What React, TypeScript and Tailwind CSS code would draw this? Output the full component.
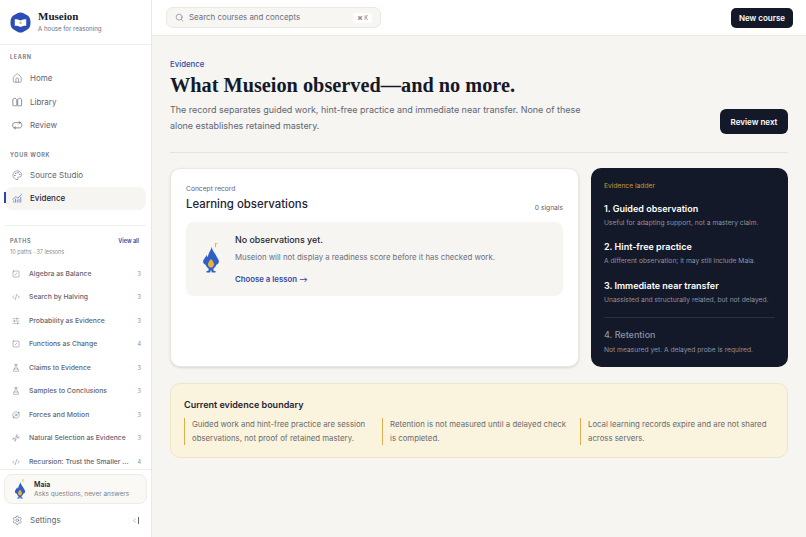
import { ChartNoAxesCombined, ChevronLeft, CodeXml, Dna, FlaskConical, House, Orbit, Palette, Search, Settings, SlidersHorizontal, SquareSlash } from 'lucide-react';

const paths = [
  { name: 'Algebra as Balance', n: 3, icon: SquareSlash },
  { name: 'Search by Halving', n: 3, icon: CodeXml },
  { name: 'Probability as Evidence', n: 3, icon: SlidersHorizontal },
  { name: 'Functions as Change', n: 4, icon: SquareSlash },
  { name: 'Claims to Evidence', n: 3, icon: FlaskConical },
  { name: 'Samples to Conclusions', n: 3, icon: FlaskConical },
  { name: 'Forces and Motion', n: 3, icon: Orbit },
  { name: 'Natural Selection as Evidence', n: 3, icon: Dna },
  { name: 'Recursion: Trust the Smaller ...', n: 4, icon: CodeXml },
];

function Flame({ className }: { className: string }) {
  return (
    <svg viewBox="0 0 20 36" className={className}>
      <path d="M11 5c0 4 3 6 4.500 9.500.8 2 2.300 3.500 3 5.500.8 2.500-.5 4.500-2.500 5-.8 2-2 3.500-3.500 4.500l.5 2.500h2v1.500H11L10 30.500 9 33.500H5V32h2l.5-2.500C6 28.500 4.800 27 4 25c-2-.5-3.300-2.500-2.500-5 .7-2 2.500-3 3.500-6 .5 1 1 1.800 1.500 2.500C7 12 9.500 9.500 11 5z" fill="#2f5fc4" />
      <path d="M10 18.500c1.800 2 3.300 3.800 3.300 6 0 2.200-1.500 3.700-3.300 3.700s-3.300-1.500-3.300-3.700c0-2.200 1.500-4 3.300-6z" fill="#e8b23c" />
      <path d="M15 1.500v3.500" stroke="#e8b23c" strokeWidth="1.200" strokeLinecap="round" />
      <path d="M15 1.500h1.500" stroke="#e8b23c" strokeWidth="1" strokeLinecap="round" />
    </svg>
  );
}

function LibraryIcon({ className }: { className: string }) {
  return (
    <svg viewBox="0 0 12 12" fill="none" stroke="currentColor" strokeWidth="0.9" className={className}>
      <path d="M1 3.500C1 2 2 1.500 3 1.500S5.500 2 5.500 3.500v6c0 .7-.8 1-1.500.6-.6-.3-1.400-.3-2 0-.5.3-1 0-1-.6z" />
      <path d="M6.500 3.500C6.500 2 8 1.500 9 1.500s2 .5 2 2v6c0 .6-.5.9-1 .6-.6-.3-1.400-.3-2 0-.7.4-1.500.1-1.500-.6z" />
    </svg>
  );
}

function ReviewIcon({ className }: { className: string }) {
  return (
    <svg viewBox="0 0 12 12" fill="none" stroke="currentColor" strokeWidth="0.9" strokeLinecap="round" className={className}>
      <path d="M2.500 9C1.200 8.500.8 7.500.8 6c0-2 1-3 2.700-3h6" />
      <path d="M9.500 3C10.800 3.500 11.200 4.500 11.200 6c0 2-1 3-2.700 3h-6" />
      <path d="M8 1.800 9.500 3 8 4.200M4 7.800 2.500 9 4 10.200" />
    </svg>
  );
}

function NavItem({ icon: Icon, label, active }: { icon: React.ElementType; label: string; active?: boolean }) {
  return (
    <div className={`relative mx-[5px] flex h-[23.5px] items-center gap-[7.500px] rounded-[8px] pl-[7px] text-[8px] ${active ? 'bg-[#f6f5f2] font-medium text-[#1f2433]' : 'text-[#5f6472]'}`}>
      {active && <span className="absolute left-[-1px] top-[5px] h-[11px] w-[2px] bg-[#2b45a8]" />}
      <Icon size={10.500} strokeWidth={1.3} className={`h-[10.500px] w-[10.500px] ${active ? 'text-[#33499f]' : 'text-[#6b7080]'}`} />
      {label}
    </div>
  );
}

function Sidebar() {
  return (
    <aside className="flex h-[537px] w-[152px] shrink-0 flex-col overflow-hidden border-r border-[#ece9e3] bg-white">
      <div className="flex h-[45px] shrink-0 items-center gap-[7px] border-b border-[#f0eee9] pl-[10px]">
        <svg viewBox="0 0 22 22" className="h-[21px] w-[21px]">
          <path d="M11 .500c2.500 0 4 1.500 6 2.500 3 1.300 4.500 3.500 4.500 8s-1.500 6.500-4.500 8c-2 1-3.500 2.500-6 2.500S7 20 5 19c-3-1.500-4.500-3.500-4.500-8S2 4.300 5 3c2-1 3.500-2.500 6-2.500z" fill="#2c4cb8" />
          <path d="M5 7.500c2.200 0 4.500.3 6 1.300 1.500-1 3.800-1.300 6-1.300v6.800c-2.200 0-4.500.3-6 1.300-1.500-1-3.800-1.300-6-1.300z" fill="#fff" />
          <circle cx="11" cy="11.500" r="1.200" fill="#e8b23c" />
        </svg>
        <div>
          <div className="-mt-[2px] font-['Liberation_Serif',serif] text-[11px] font-bold leading-[13px] text-[#161a28]">Museion</div>
          <div className="mt-[1px] text-[6.100px] leading-[9px] text-[#6b7080]">A house for reasoning</div>
        </div>
      </div>
      <div className="mt-[8px] pl-[10px] text-[5.500px] font-semibold leading-[9px] tracking-[0.12em] text-[#6b7080]">LEARN</div>
      <div className="mt-[4.500px]">
        <NavItem icon={House} label="Home" />
        <NavItem icon={LibraryIcon} label="Library" />
        <NavItem icon={ReviewIcon} label="Review" />
      </div>
      <div className="mt-[13.500px] pl-[10px] text-[5.500px] font-semibold leading-[9px] tracking-[0.12em] text-[#6b7080]">YOUR WORK</div>
      <div className="mt-[3.500px]">
        <NavItem icon={Palette} label="Source Studio" />
        <NavItem icon={ChartNoAxesCombined} label="Evidence" active />
      </div>
      <div className="mx-[5px] mt-[15px] border-t border-[#f0eee9]" />
      <div className="mt-[11px] flex items-center justify-between pl-[10px] pr-[12px] text-[5.500px] leading-[9px]">
        <span className="font-semibold tracking-[0.12em] text-[#6b7080]">PATHS</span>
        <span className="font-semibold text-[#33499f]">View all</span>
      </div>
      <div className="mt-[2px] pl-[10px] text-[5.500px] leading-[9px] text-[#8b8f9a]">10 paths · 37 lessons</div>
      <div className="mt-[5px] min-h-0 flex-1 overflow-hidden">
        {paths.map((p) => (
          <div key={p.name} className="flex h-[23.5px] items-center pl-[12px] pr-[10px] text-[6.800px] font-medium text-[#5f6472]">
            <p.icon size={8} strokeWidth={1.4} className="mr-[9px] shrink-0 text-[#6b7080]" />
            <span className="whitespace-nowrap">{p.name}</span>
            <span className="ml-auto text-[5.500px] font-normal text-[#8b8f9a]">{p.n}</span>
          </div>
        ))}
      </div>
      <div className="shrink-0 border-t border-[#f0eee9] px-[4px] pb-[5.500px] pt-[4px]">
        <div className="flex h-[30px] items-center gap-[8px] rounded-[8px] border border-[#eeece6] bg-[#faf9f6] pl-[9px]">
          <Flame className="h-[21px] w-[12px]" />
          <div>
            <div className="text-[7px] font-semibold leading-[9px] text-[#1f2433]">Maia</div>
            <div className="mt-[1px] text-[6.500px] leading-[9px] text-[#7b7f8b]">Asks questions, never answers</div>
          </div>
        </div>
        <div className="mt-[4.500px] flex h-[23px] items-center pl-[8px] pr-[8px] text-[8px] text-[#5f6472]">
          <Settings size={10.500} strokeWidth={1.3} className="mr-[7.500px]" />
          Settings
          <span className="ml-auto flex items-center"><ChevronLeft size={7} strokeWidth={1.5} /><span className="h-[7px] w-px bg-[#5f6472]" /></span>
        </div>
      </div>
    </aside>
  );
}

const ladder = [
  ['1. Guided observation', 'Useful for adapting support, not a mastery claim.'],
  ['2. Hint-free practice', 'A different observation; it may still include Maia.'],
  ['3. Immediate near transfer', 'Unassisted and structurally related, but not delayed.'],
];

const boundary = [
  ['Guided work and hint-free practice are session', 'observations, not proof of retained mastery.'],
  ['Retention is not measured until a delayed check', 'is completed.'],
  ['Local learning records expire and are not shared', 'across servers.'],
];

export default function App() {
  return (
    <div className="flex h-[537px] w-[806px] overflow-hidden bg-[#f6f5f1] font-['Inter',sans-serif]">
      <Sidebar />
      <div className="min-w-0 flex-1">
        <header className="flex h-[36px] items-center justify-between border-b border-[#ece9e3] bg-white pl-[14px] pr-[13px]">
          <div className="flex h-[21px] w-[215px] items-center rounded-[7px] border border-[#ebe8e1] bg-[#f7f6f2] pl-[8px] pr-[8px] text-[7.900px] text-[#6b7080]">
            <Search size={9} strokeWidth={1.5} className="mr-[5px]" />
            Search courses and concepts
            <span className="ml-auto rounded-[3px] bg-white px-[4px] py-[1px] text-[5.500px] leading-[8px]">⌘ K</span>
          </div>
          <div className="flex h-[20px] w-[62px] items-center justify-center rounded-[5px] bg-[#141929] text-[8px] font-semibold text-white">New course</div>
        </header>
        <main className="px-[18px] pt-[21px]">
          <div className="text-[7.800px] font-medium leading-[14px] text-[#33499f]">Evidence</div>
          <h1 className="font-['Liberation_Serif',serif] text-[20.300px] font-bold leading-[29px] text-[#141929]">What Museion observed—and no more.</h1>
          <div className="flex items-end justify-between border-b border-[#e6e3dc] pb-[17.500px]">
            <p className="mt-[2px] text-[8.960px] leading-[16px] text-[#5f6472]">The record separates guided work, hint-free practice and immediate near transfer. None of these<br />alone establishes retained mastery.</p>
            <div className="flex h-[25px] w-[68px] items-center justify-center rounded-[6px] bg-[#141929] text-[8px] font-semibold text-white">Review next</div>
          </div>
          <div className="mt-[15.500px] grid grid-cols-[409px_197px] gap-[12px]">
            <section className="h-[199px] rounded-[10px] border border-[#ebe8e1] bg-white px-[15px] pt-[15px] shadow-sm">
              <div className="text-[6.700px] leading-[10px] text-[#5f6472]">Concept record</div>
              <div className="flex items-end justify-between">
                <div className="mt-[2px] text-[11.400px] font-medium leading-[17px] text-[#1f2433]">Learning observations</div>
                <div className="text-[6.700px] leading-[10px] text-[#5f6472]">0 signals</div>
              </div>
              <div className="mt-[9px] flex h-[74px] items-start rounded-[8px] bg-[#f6f5f1] pl-[16px]">
                <Flame className="mt-[20px] h-[33px] w-[18px] shrink-0" />
                <div className="ml-[15px] pt-[10.500px]">
                  <div className="text-[8.900px] font-medium leading-[13px] text-[#1f2433]">No observations yet.</div>
                  <div className="mt-[5px] text-[7.800px] leading-[12px] text-[#6b7080]">Museion will not display a readiness score before it has checked work.</div>
                  <div className="mt-[10px] text-[7.800px] font-semibold leading-[12px] text-[#33499f]">Choose a lesson <span className="text-[6.500px]">⟶</span></div>
                </div>
              </div>
            </section>
            <section className="h-[199px] rounded-[10px] bg-[#141929] px-[13px] pt-[13px]">
              <div className="text-[6.700px] leading-[10px] text-[#c99a35]">Evidence ladder</div>
              <div className="mt-[10.500px] space-y-[12.500px]">
                {ladder.map(([t, d]) => (
                  <div key={t}>
                    <div className="text-[9px] font-semibold leading-[13px] text-white">{t}</div>
                    <div className="mt-[3px] text-[6.700px] leading-[10px] text-[#8d92a1]">{d}</div>
                  </div>
                ))}
              </div>
              <div className="mt-[12.500px] border-t border-[#2a3042] pt-[10px]">
                <div className="text-[9px] font-medium leading-[13px] text-[#8d92a1]">4. Retention</div>
                <div className="mt-[3.500px] text-[6.700px] leading-[10px] text-[#8d92a1]">Not measured yet. A delayed probe is required.</div>
              </div>
            </section>
          </div>
          <section className="mt-[16px] h-[75px] rounded-[10px] border border-[#efe6c8] bg-[#faf3dd] px-[13px] pt-[14px]">
            <div className="text-[9px] font-semibold leading-[13px] text-[#1f2433]">Current evidence boundary</div>
            <div className="mt-[7px] grid grid-cols-[198px_198px_198px]">
              {boundary.map(([a, b]) => (
                <div key={a} className="whitespace-nowrap border-l-[1.5px] border-[#d9b04d] pl-[7px] text-[7.800px] leading-[13.500px] text-[#6b6c6e]">{a}<br />{b}</div>
              ))}
            </div>
          </section>
        </main>
      </div>
    </div>
  );
}
